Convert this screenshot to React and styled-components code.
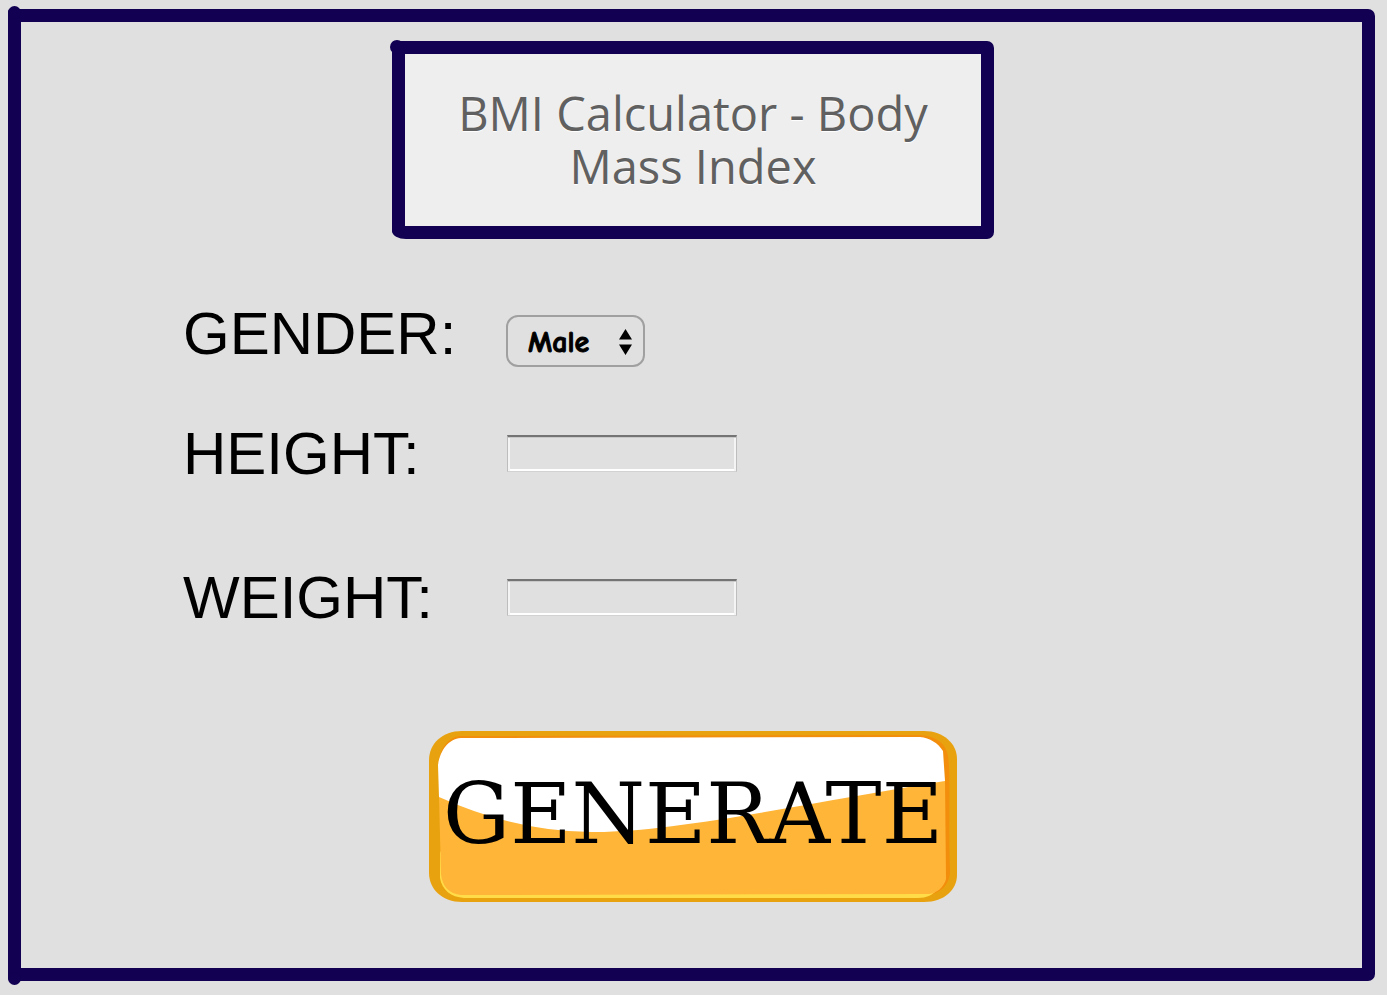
import React from "react";
import styled, { createGlobalStyle } from "styled-components";

const navy = "#120052";

const GlobalStyle = createGlobalStyle`
  *, *::before, *::after { box-sizing: border-box; }
  body {
    margin: 0;
    background: #e0e0e0;
    color: #000;
    font-family: "Liberation Sans", Arial, sans-serif;
  }
  #root { display: flow-root; }
`;

const Frame = styled.main`
  position: relative;
  margin: 9px 12px 14px 8px;
  padding: 19px 0 66px 3px;
  border: 13px solid ${navy};
  border-radius: 3px 7px 7px 3px;

  &::before,
  &::after {
    content: "";
    position: absolute;
    left: -13px;
    width: 13px;
    height: 13px;
    border-radius: 50%;
    background: ${navy};
  }
  &::before { top: -16px; }
  &::after { bottom: -17px; }
`;

const TitleCard = styled.header`
  position: relative;
  width: 602px;
  max-width: 100%;
  margin: 0 auto;
  padding: 33px 40px;
  border: 13px solid ${navy};
  border-radius: 3px 7px 7px 14px / 3px 7px 7px 8px;
  background: #eee;

  &::before,
  &::after {
    content: "";
    position: absolute;
    width: 14px;
    height: 14px;
    border-radius: 50%;
    background: ${navy};
  }
  &::before {
    left: -15px;
    top: -14px;
  }
  &::after {
    left: -13px;
    bottom: -10px;
    width: 13px;
  }
`;

const Title = styled.h1`
  margin: 0;
  font: 400 47px/53px "Open Sans", "Noto Sans", sans-serif;
  color: #606060;
  text-align: center;
  text-shadow: 0 1px 1px #fff;
`;

const Form = styled.form`
  display: flex;
  flex-direction: column;
`;

const Row = styled.div`
  display: grid;
  grid-template-columns: 323px 1fr;
  align-items: start;
  margin-left: 159px;
  margin-top: ${(p) => p.$gap}px;
`;

const Label = styled.label`
  font-size: 60px;
  line-height: 70px;
`;

const SelectBox = styled.div`
  position: relative;
  width: 139px;
  margin-top: 16px;
`;

const Select = styled.select`
  appearance: none;
  display: block;
  width: 100%;
  height: 52px;
  padding: 3px 40px 0 20px;
  border: 2px solid #a0a0a0;
  border-radius: 12px;
  background: transparent;
  color: #000;
  font: 700 30px "Comic Sans MS", "Comic Neue", Lato, sans-serif;
  -webkit-text-stroke: 1px #000;
`;

const Arrows = styled.svg`
  position: absolute;
  right: 13px;
  top: 14px;
  pointer-events: none;
`;

const TextInput = styled.input`
  width: 230px;
  height: 37px;
  margin: 16px 0 0 1px;
  padding: 2px 8px;
  border: 1px solid #bdbdbd;
  border-top: 2px solid #747474;
  border-bottom-color: #d2d2d2;
  border-radius: 0;
  background: transparent;
  box-shadow: inset 0 1px #c9c9c9, inset 2px 0 #f4f4f4, inset -2px 0 #f4f4f4,
    inset 0 -2px #fff;
  font: 20px "Liberation Sans", Arial, sans-serif;
`;

const GenerateButton = styled.button`
  position: relative;
  display: flex;
  align-items: center;
  justify-content: center;
  align-self: center;
  width: 528px;
  height: 171px;
  margin-top: 98px;
  padding: 0 0 6px;
  border: 0;
  background: none;
  color: #000;
  font: 84px "DejaVu Serif", serif;
  cursor: pointer;
`;

const ButtonArt = styled.svg`
  position: absolute;
  inset: 0;
`;

const ButtonText = styled.span`
  position: relative;
`;

function GlossyPlate() {
  return (
    <ButtonArt width="528" height="171" viewBox="0 0 528 171" aria-hidden="true">
      <path
        fill="#e8a210"
        d="M33 0H495C515 0 528 13 528 28V144C528 158 516 171 495 171H33C13 171 0 158 0 142V29C0 13 13 0 33 0Z"
      />
      <path
        fill="#f28e0c"
        d="M30 5L491 4C508 5 517 13 519 25C522 45 519 90 521 140C521 154 512 163 492 166L514 120L510 20L491 8L32 9C20 11 13 20 9 34C11 18 18 7 30 5Z"
      />
      <path
        fill="#ffdc48"
        d="M11 120V147C13 159 22 166 35 167H489C498 167 503 164 507 160L500 158H34Z"
      />
      <path
        fill="#ffb538"
        d="M10 66L516 50L517 148C515 156 508 162 500 163L32 164C20 163 13 155 12 143Z"
      />
      <path
        fill="#fff"
        d="M10 66L9 34C11 20 19 8 32 7L491 6C501 7 509 12 514 20L516 50C400 68 250 101 167 101Q90 102 10 66Z"
      />
    </ButtonArt>
  );
}

export default function App() {
  return (
    <>
      <GlobalStyle />
      <Frame>
        <TitleCard>
          <Title>BMI Calculator - Body Mass Index</Title>
        </TitleCard>
        <Form onSubmit={(e) => e.preventDefault()}>
          <Row $gap={60}>
            <Label htmlFor="gender">GENDER:</Label>
            <SelectBox>
              <Select id="gender" defaultValue="Male">
                <option>Male</option>
                <option>Female</option>
              </Select>
              <Arrows width="13" height="26" viewBox="0 0 13 26" aria-hidden="true">
                <path d="M6.500 0L13 10.500H0ZM0 15.500H13L6.500 26Z" />
              </Arrows>
            </SelectBox>
          </Row>
          <Row $gap={50}>
            <Label htmlFor="height">HEIGHT:</Label>
            <TextInput id="height" type="text" />
          </Row>
          <Row $gap={74}>
            <Label htmlFor="weight">WEIGHT:</Label>
            <TextInput id="weight" type="text" />
          </Row>
          <GenerateButton type="submit">
            <GlossyPlate />
            <ButtonText>GENERATE</ButtonText>
          </GenerateButton>
        </Form>
      </Frame>
    </>
  );
}
